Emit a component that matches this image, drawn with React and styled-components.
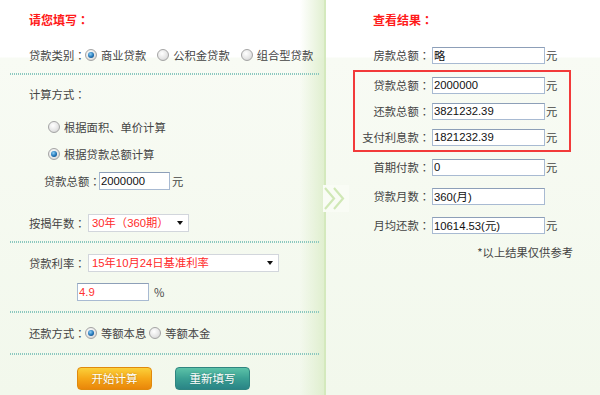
import React from "react";
import styled, {createGlobalStyle, css} from "styled-components";

const GlobalStyle = createGlobalStyle`
    html, body {
        margin: 0;
        padding: 0;
    }
    body {
        font-family: "Liberation Sans", "Noto Sans CJK SC", sans-serif;
        font-size: 11.3px;
        color: #333;
    }
`;

const Page = styled.div`
    position: relative;
    width: 600px;
    height: 395px;
    display: flex;
    overflow: hidden;
    background: linear-gradient(#ffffff 0, #ffffff 57px, #f8fbf4 58px, #f2f8ec 100%);
`;

const LeftPanel = styled.div`
    width: 324px;
    flex: none;
    background: linear-gradient(to right, rgba(230, 242, 218, 0) 300px, rgba(222, 238, 204, 0.9) 324px);
`;

const DividerLine = styled.div`
    width: 2px;
    flex: none;
    background: #d4e9bd;
`;

const RightPanel = styled.div`
    flex: 1;
    padding-left: 27px;
`;

const Title = styled.div`
    height: 40px;
    line-height: 40px;
    padding-left: ${props => props.$pl}px;
    color: #ff1a1a;
    font-weight: bold;
    font-size: 12px;
    font-family: "Noto Sans CJK SC", sans-serif;
`;

// full width colon sits centred in the TC face, as in the original page
const Colon = styled.span`
    font-family: "Noto Sans CJK TC", sans-serif;
`;

const Row = styled.div`
    display: flex;
    align-items: center;
    height: ${props => props.$h}px;
    margin-top: ${props => props.$mt || 0}px;
    padding-left: ${props => props.$pl || 0}px;
    white-space: nowrap;
`;

const Label = styled.span`
    width: ${props => props.$w ? props.$w + "px" : "auto"};
    font-family: "Noto Sans CJK SC", sans-serif;
    color: #444;
`;

const Dotted = styled.div`
    height: 2px;
    margin: ${props => props.$mt || 0}px 5px 0 10px;
    background: repeating-linear-gradient(90deg, #8cc8bf 0, #8cc8bf 1px, transparent 1px, transparent 2px);
`;

const Option = styled.label`
    display: flex;
    align-items: center;
    gap: 4px;
    margin-right: ${props => props.$gap || 0}px;
    font-family: "Noto Sans CJK SC", sans-serif;
    color: #444;
`;

const Radio = styled.span`
    position: relative;
    display: inline-block;
    flex: none;
    width: 10px;
    height: 10px;
    border-radius: 50%;
    border: 1px solid #a4a4a4;
    background: radial-gradient(circle at 40% 35%, #ffffff 0, #e4e4e4 60%, #c8c8c8 100%);

    ${props => props.$checked && css`
        &::after {
            content: "";
            position: absolute;
            left: 2px;
            top: 2px;
            width: 6px;
            height: 6px;
            border-radius: 50%;
            background: radial-gradient(circle at 40% 35%, #8fd0f5 0, #1f74b8 55%, #0b3a66 100%);
        }
    `}
`;

const Field = styled.input`
    box-sizing: border-box;
    width: ${props => props.$w}px;
    height: ${props => props.$hh || 18}px;
    margin: 0 ${props => props.$mr || 0}px 0 ${props => props.$ml || 0}px;
    padding: 0 1px;
    border: 1px solid #a8bad2;
    border-top-color: #8d9fb8;
    background: #fff;
    font-family: "Liberation Sans", "Noto Sans CJK SC", sans-serif;
    font-size: 11.3px;
    color: ${props => props.$red ? "#ff3030" : "#111"};
    outline: none;
`;

const Unit = styled.span`
    margin-left: ${props => props.$ml || 0}px;
    font-family: "Noto Sans CJK SC", sans-serif;
    color: #444;
`;

const Select = styled.div`
    position: relative;
    box-sizing: border-box;
    width: ${props => props.$w}px;
    height: 18px;
    line-height: 16px;
    padding-left: 3px;
    border: 1px solid #d2d6dc;
    background: #fff;
    color: #ff2a2a;
    font-family: "Liberation Sans", "Noto Sans CJK TC", sans-serif;

    &::after {
        content: "";
        position: absolute;
        right: 5px;
        top: 6px;
        border-left: 3.5px solid transparent;
        border-right: 3.5px solid transparent;
        border-top: 4px solid #111;
    }
`;

const Buttons = styled.div`
    display: flex;
    gap: 23px;
    margin-top: 12px;
    padding-left: 77px;
`;

const Button = styled.div`
    box-sizing: border-box;
    width: 75px;
    height: 23px;
    line-height: 21px;
    text-align: center;
    border-radius: 4px;
    color: #fff;
    font-family: "Noto Sans CJK SC", sans-serif;
    font-size: 11.5px;
    text-shadow: 0 0 2px rgba(0, 0, 0, 0.25);
    ${props => props.$variant === "orange" ? css`
        border: 1px solid #e08a0c;
        background: linear-gradient(#fbd03a 0, #f6a818 50%, #e9860a 100%);
    ` : css`
        border: 1px solid #2f8580;
        background: linear-gradient(#5cc2a8 0, #3aa093 50%, #2a8486 100%);
    `}
`;

const ResultBox = styled.div`
    width: 214px;
    border: 2px solid #f23a3a;
`;

const ResultRow = styled.div`
    display: flex;
    align-items: center;
    height: ${props => props.$h}px;
    margin-top: ${props => props.$mt || 0}px;
    padding-left: ${props => props.$pl || 0}px;
`;

const ResultLabel = styled.span`
    width: 75px;
    margin-right: 2px;
    text-align: right;
    font-family: "Noto Sans CJK SC", sans-serif;
    color: #444;
    white-space: nowrap;
`;

const Note = styled.div`
    height: 26px;
    line-height: 26px;
    width: 220px;
    text-align: right;
    font-family: "Noto Sans CJK SC", sans-serif;
    color: #444;
`;

const Arrow = styled.svg`
    position: absolute;
    left: 323px;
    top: 185px;
`;

const results = [
    {label: "贷款总额", value: "2000000", unit: "元"},
    {label: "还款总额", value: "3821232.39", unit: "元"},
    {label: "支付利息款", value: "1821232.39", unit: "元"},
];

const after = [
    {label: "首期付款", value: "0", unit: "元"},
    {label: "贷款月数", value: "360(月)", unit: ""},
    {label: "月均还款", value: "10614.53(元)", unit: "元"},
];

const ResultLine = ({item, h, mt, pl}) => (
    <ResultRow $h={h} $mt={mt} $pl={pl}>
        <ResultLabel>{item.label}<Colon>：</Colon></ResultLabel>
        <Field $w={113} $hh={17} value={item.value} readOnly/>
        <Unit $ml={1}>{item.unit}</Unit>
    </ResultRow>
);

export default function App() {
    return (
        <Page>
            <GlobalStyle/>
            <LeftPanel>
                <Title $pl={29}>请您填写<Colon>：</Colon></Title>
                <Row $h={30} $pl={29}>
                    <Label $w={56}>贷款类别<Colon>：</Colon></Label>
                    <Option $gap={11}><Radio $checked/>商业贷款</Option>
                    <Option $gap={11}><Radio/>公积金贷款</Option>
                    <Option><Radio/>组合型贷款</Option>
                </Row>
                <Dotted $mt={3}/>
                <Row $h={38} $pl={29}><Label>计算方式<Colon>：</Colon></Label></Row>
                <Row $h={27} $pl={48}><Option><Radio/>根据面积、单价计算</Option></Row>
                <Row $h={27} $pl={48}><Option><Radio $checked/>根据贷款总额计算</Option></Row>
                <Row $h={28} $pl={44}>
                    <Label $w={55}>贷款总额<Colon>：</Colon></Label>
                    <Field $w={71} $mr={2} value="2000000" readOnly/>
                    <Unit>元</Unit>
                </Row>
                <Row $h={36} $mt={10} $pl={29}>
                    <Label $w={59}>按揭年数<Colon>：</Colon></Label>
                    <Select $w={101}>30年（360期）</Select>
                </Row>
                <Dotted/>
                <Row $h={40} $pl={29}>
                    <Label $w={59}>贷款利率<Colon>：</Colon></Label>
                    <Select $w={191}>15年10月24日基准利率</Select>
                </Row>
                <Row $h={18} $pl={77}>
                    <Field $w={72} $mr={5} $red value="4.9" readOnly/>
                    <Unit>%</Unit>
                </Row>
                <Dotted $mt={10}/>
                <Row $h={40} $pl={29}>
                    <Label $w={56}>还款方式<Colon>：</Colon></Label>
                    <Option $gap={3}><Radio $checked/>等额本息</Option>
                    <Option><Radio/>等额本金</Option>
                </Row>
                <Dotted/>
                <Buttons>
                    <Button $variant="orange">开始计算</Button>
                    <Button $variant="teal">重新填写</Button>
                </Buttons>
            </LeftPanel>
            <DividerLine/>
            <RightPanel>
                <Title $pl={20}>查看结果<Colon>：</Colon></Title>
                <ResultLine item={{label: "房款总额", value: "略", unit: "元"}} h={30} pl={2}/>
                <ResultBox>
                    {results.map(item => <ResultLine key={item.label} item={item} h={26}/>)}
                </ResultBox>
                {after.map(item => <ResultLine key={item.label} item={item} h={28} mt={1} pl={2}/>)}
                <Note>*以上结果仅供参考</Note>
            </RightPanel>
            <Arrow width="26" height="27" viewBox="0 0 26 27">
                <rect x="0" y="0" width="26" height="27" fill="#f9fcf5"/>
                <path d="M2 3 L11 13.5 L2 24" fill="none" stroke="#d0e8b6" strokeWidth="2.2"/>
                <path d="M11 3 L20 13.5 L11 24" fill="none" stroke="#d0e8b6" strokeWidth="2.2"/>
            </Arrow>
        </Page>
    );
}
